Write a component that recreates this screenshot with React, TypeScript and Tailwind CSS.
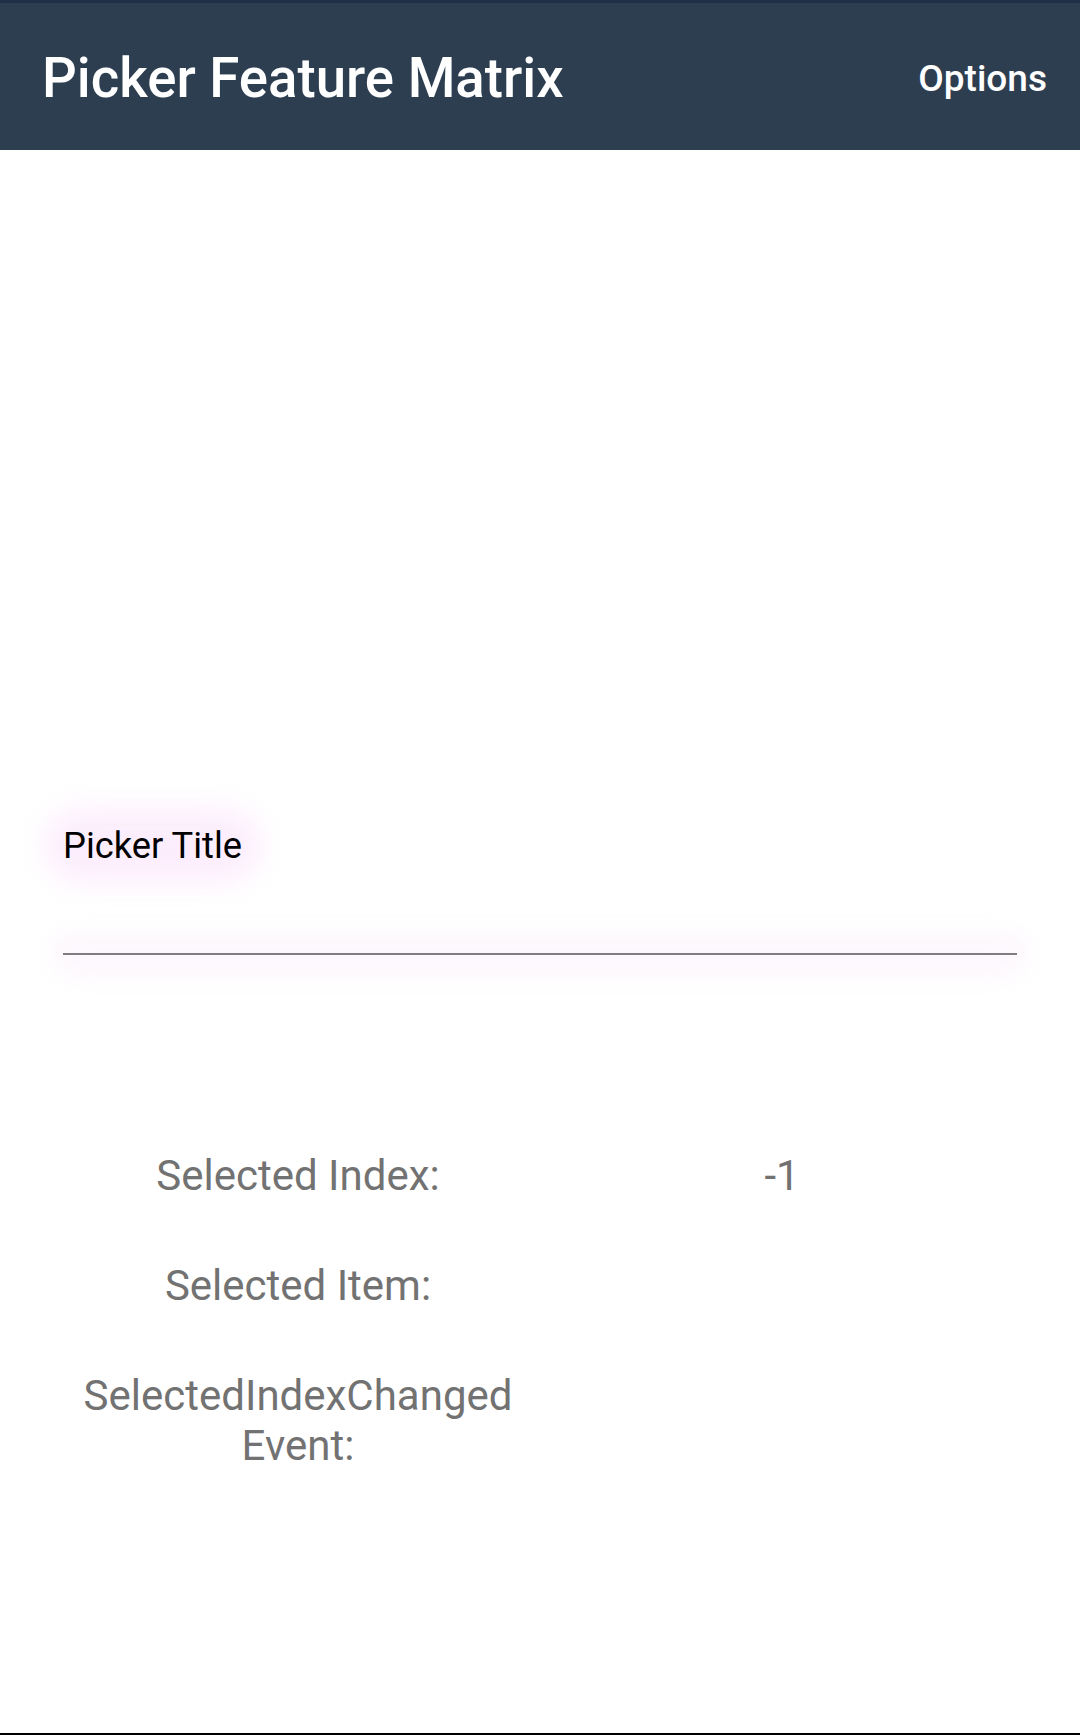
import React from "react";

const rows: { label: string[]; value: string }[] = [
  { label: ["Selected Index:"], value: "-1" },
  { label: ["Selected Item:"], value: "" },
  { label: ["SelectedIndexChanged", "Event:"], value: "" },
];

const App: React.FC = () => {
  return (
    <div className="w-[1080px] h-[1735px] bg-white flex flex-col font-['Roboto',sans-serif] border-b-2 border-black overflow-hidden">
      {/* Toolbar */}
      <div className="h-[150px] shrink-0 bg-[#2d3e50] border-t-[3px] border-[#1e3047] flex items-center justify-between pl-[42px] pr-[33px] pt-[4px]">
        <span className="text-white text-[54.6px] font-medium leading-none">
          Picker Feature Matrix
        </span>
        <span className="text-white text-[37px] font-medium leading-none">
          Options
        </span>
      </div>

      {/* Picker */}
      <div className="mt-[674px] mx-[63px] flex flex-col">
        <div className="relative self-start">
          <div className="absolute -inset-x-[18px] -inset-y-[14px] rounded-full bg-[#fcedfc] blur-[14px]" />
          <span className="relative text-black text-[36.3px] leading-[43px]">
            Picker Title
          </span>
        </div>
        <div className="relative mt-[86px]">
          <div className="absolute -inset-x-[12px] -inset-y-[22px] rounded-full bg-[#fdf8fd] blur-[10px]" />
          <div className="relative h-[2px] bg-[#7e7e7e]" />
        </div>
      </div>

      {/* Values */}
      <div className="mt-[196px] px-[56px] grid grid-cols-2 gap-y-[60px]">
        {rows.map((r) => (
          <React.Fragment key={r.label.join(" ")}>
            <div className="text-center text-[#727272] text-[42px] leading-[50px]">
              {r.label.map((l) => (
                <div key={l}>{l}</div>
              ))}
            </div>
            <div className="text-center text-[#727272] text-[42px] leading-[50px]">
              {r.value}
            </div>
          </React.Fragment>
        ))}
      </div>
    </div>
  );
};

export default App;
